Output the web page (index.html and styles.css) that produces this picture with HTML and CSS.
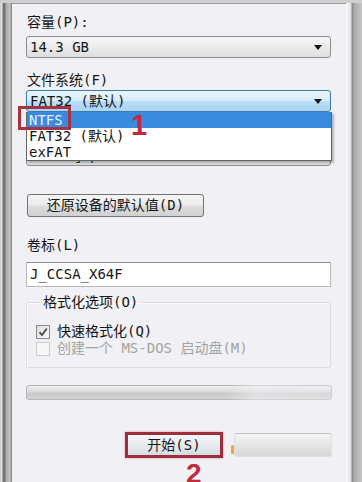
FILE: index.html
```html
<!DOCTYPE html>
<html lang="zh-CN">
<head>
<meta charset="utf-8">
<title>格式化</title>
<link rel="stylesheet" href="styles.css">
</head>
<body>
<div class="window">
  <div class="frame-left"></div>
  <div class="content">
    <div class="label l1">容量(P):</div>
    <div class="combo"><span class="combo-text">14.3 GB</span><span class="arrow"></span></div>

    <div class="label l2">文件系统(F)</div>
    <div class="fs-wrap">
      <div class="combo combo-focus"><span class="combo-text">FAT32 (默认)</span><span class="arrow"></span></div>
      <ul class="dropdown">
        <li class="item selected">NTFS</li>
        <li class="item">FAT32 (默认)</li>
        <li class="item">exFAT</li>
      </ul>
      <div class="mark-box"></div>
      <div class="mark-num n1">1</div>
    </div>

    <div class="label l3"></div>
    <div class="combo combo-hidden"><span class="combo-text">4096 字节</span><span class="arrow"></span></div>

    <button class="btn btn-restore" type="button">还原设备的默认值(D)</button>

    <div class="label l4">卷标(L)</div>
    <div class="input">J_CCSA_X64F</div>

    <fieldset class="group">
      <legend class="legend">格式化选项(O)</legend>
      <div class="check-row">
        <span class="check checked"><svg width="12" height="12" viewBox="0 0 12 12"><path d="M2.5 6.2 L5 9 L9.8 2.5" fill="none" stroke="#4a4a4a" stroke-width="1.8"/></svg></span>
        <span class="check-label">快速格式化(Q)</span>
      </div>
      <div class="check-row disabled">
        <span class="check"></span>
        <span class="check-label">创建一个 MS-DOS 启动盘(M)</span>
      </div>
    </fieldset>

    <div class="progress"><div class="progress-fade"></div></div>

    <div class="btn-row">
      <button class="btn btn-start" type="button">开始(S)</button>
      <span class="orange-mark"></span>
      <button class="btn btn-close" type="button"></button>
      <div class="mark-num n2">2</div>
    </div>
  </div>
  <div class="frame-right"></div>
</div>
</body>
</html>
```
FILE: styles.css
```css
html, body {
  margin: 0;
  padding: 0;
}
body {
  width: 362px;
  height: 482px;
  overflow: hidden;
  background: #f0eff3;
  font-family: "DejaVu Sans Mono", "Noto Sans CJK SC", monospace;
  font-size: 14px;
  color: #151515;
}
.window {
  display: flex;
  height: 482px;
  padding-top: 3px;
  box-sizing: border-box;
  background: linear-gradient(#cfcfcf, #c4c4c4);
}
.frame-left {
  width: 12px;
  flex: none;
  background: linear-gradient(to right, #bdbdbd 0, #e2e2e2 1px, #e2e2e2 2px, #6f6f6f 3px, #777 5px, #a9a9a9 6px, #bdbdbd 9px, #c9c9c9 10px, #8c8c8c 11px, #8c8c8c 12px);
}
.frame-right {
  width: 17px;
  flex: none;
  background: linear-gradient(to right, #fbfbfb 0, #fbfbfb 1px, #ececec 2px, #e4e4e4 5px, #8a8a8a 6px, #8f8f8f 7px, #a9a9a9 8px, #b9b9b9 12px, #c6c6c6 17px);
}
.content {
  flex: 1;
  display: flex;
  flex-direction: column;
  align-items: flex-start;
  padding: 0 14px;
  border-top: 1px solid #9c9c9c;
  background: #f1f0f4;
}
.label {
  height: 20px;
  line-height: 20px;
  font-size: 14px;
  white-space: nowrap;
}
.l1 { margin-top: 8px; margin-left: 1px; }
.l2 { margin-top: 12px; margin-left: 1px; }
.l3 { margin-top: 12px; margin-left: 1px; }
.l4 { margin-top: 18px; margin-left: 1px; }

.combo {
  position: relative;
  box-sizing: border-box;
  width: 305px;
  height: 22px;
  margin-top: 4px;
  border: 1px solid #8d8d8d;
  border-radius: 3px;
  background: linear-gradient(#f7f7f7, #ebebeb 50%, #dfdfdf);
  display: flex;
  align-items: center;
  justify-content: space-between;
  padding: 0 8px 0 3px;
}
.fs-wrap .combo,
.l3 + .combo { margin-top: 0; }
.combo-hidden .combo-text { padding-top: 2px; }
.combo-text {
  line-height: 20px;
  white-space: nowrap;
}
.arrow {
  width: 0;
  height: 0;
  border-left: 4px solid transparent;
  border-right: 4px solid transparent;
  border-top: 5px solid #111;
}
.combo-focus {
  border-color: #3d7bad;
  background: linear-gradient(#eaf5fd, #d8ecfa 45%, #b8dcf5 55%, #a9d4f3);
}
.fs-wrap {
  position: relative;
  z-index: 2;
}
.dropdown {
  position: absolute;
  top: 22px;
  left: 0;
  width: 306px;
  margin: 0;
  padding: 0;
  list-style: none;
  box-sizing: border-box;
  background: #fff;
  border: 1px solid #646464;
  border-top: none;
  box-shadow: 2px 2px 2px rgba(0,0,0,0.25);
}
.item {
  height: 16px;
  line-height: 16px;
  padding-left: 2px;
  white-space: nowrap;
}
.item.selected {
  background: #3a8ae0;
  color: #e3f4ff;
}
.mark-box {
  position: absolute;
  left: -8px;
  top: 16px;
  width: 53px;
  height: 24px;
  box-sizing: border-box;
  border: 3px solid #a8323f;
}
.mark-num {
  position: absolute;
  font-family: "Liberation Sans", sans-serif;
  font-weight: bold;
  color: #c22b3c;
}
.n1 {
  left: 105px;
  top: 21px;
  font-size: 29px;
  line-height: 29px;
}
.btn {
  box-sizing: border-box;
  font-family: "DejaVu Sans Mono", "Noto Sans CJK SC", monospace;
  font-size: 14px;
  color: #151515;
  border: 1px solid #727272;
  border-radius: 3px;
  background: linear-gradient(#f4f4f4, #ececec 48%, #dddddd 52%, #d1d1d1);
  padding: 0;
}
.btn-restore {
  margin-top: 28px;
  margin-left: 1px;
  width: 177px;
  height: 23px;
  line-height: 21px;
}
.input {
  box-sizing: border-box;
  width: 305px;
  height: 25px;
  margin-top: 7px;
  border: 1px solid #b8b8b8;
  border-top-color: #8e8e8e;
  background: #fff;
  line-height: 23px;
  padding-left: 3px;
}
.group {
  box-sizing: border-box;
  width: 305px;
  margin: 5px 0 0 0;
  padding: 1px 0 10px 9px;
  border: 1px solid #dcdbe0;
  border-radius: 2px;
  box-shadow: inset 1px 1px 0 #fafafa;
}
.legend {
  padding: 0 3px;
  margin-left: 4px;
  line-height: 20px;
  height: 20px;
}
.check-row {
  display: flex;
  align-items: center;
  height: 17px;
  line-height: 17px;
  white-space: nowrap;
}
.check-row:first-of-type { margin-top: 10px; }
.check {
  box-sizing: border-box;
  width: 14px;
  height: 14px;
  margin-right: 7px;
  border: 1px solid #8b8b8b;
  background: linear-gradient(135deg, #dedede, #f8f8f8);
  display: flex;
  align-items: center;
  justify-content: center;
}
.disabled { color: #a3a3a3; }
.disabled .check {
  border-color: #cbcbcb;
  background: #f6f6f6;
}
.progress {
  position: relative;
  box-sizing: border-box;
  width: 306px;
  height: 15px;
  margin-top: 17px;
  border: 1px solid #b4b4b4;
  border-radius: 3px;
  background: linear-gradient(#eeeeee, #dadada 45%, #c9c9c9 55%, #d3d3d3);
}
.progress-fade {
  position: absolute;
  top: -2px;
  bottom: -2px;
  left: 200px;
  right: -4px;
  background: linear-gradient(to right, rgba(240,239,243,0), rgba(240,239,243,0.55) 25%, rgba(240,239,243,0.4) 100%);
}
.btn-row {
  position: relative;
  align-self: stretch;
  display: flex;
  justify-content: flex-end;
  align-items: center;
  margin-top: 32px;
}
.btn-start {
  width: 98px;
  height: 26px;
  line-height: 20px;
  border: 3px solid #9d2f3d;
  border-radius: 0;
  background: linear-gradient(#f5f6f8, #e6eaee 50%, #d4dde4);
  box-shadow: 0 0 2px rgba(180,60,70,0.5);
}
.orange-mark {
  width: 3px;
  height: 9px;
  margin: 8px 0 0 8px;
  border-radius: 2px;
  background: #f0a238;
}
.btn-close {
  width: 98px;
  height: 24px;
  border: 1px solid #e0e0e0;
  border-top-color: #c4c4c4;
  background: linear-gradient(#f4f4f4, #e8e8e8 40%, #d6d6d6);
}
.n2 {
  left: 160px;
  top: 28px;
  font-size: 28px;
  line-height: 28px;
}
```
